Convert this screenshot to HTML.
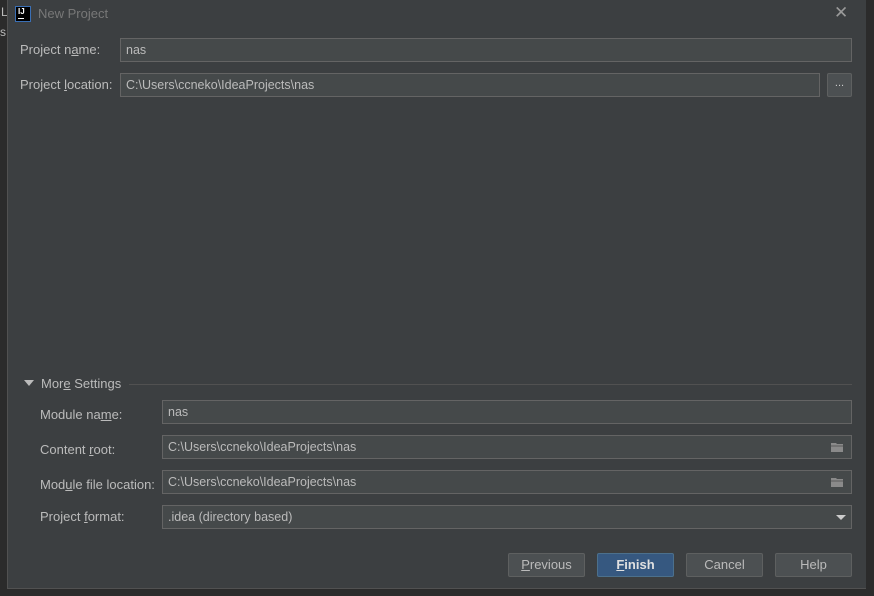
<!DOCTYPE html>
<html><head><meta charset="utf-8"><style>
*{box-sizing:border-box;margin:0;padding:0}
body{width:874px;height:596px;background:#2b2b2b;position:relative;overflow:hidden;font-family:"Liberation Sans",sans-serif;font-size:13px;color:#bbbbbb}
.dlg{position:absolute;left:7px;top:0;width:859px;height:589px;background:#3c3f41;border-left:1px solid #515151;border-bottom:1px solid #515151}
.ab{position:absolute}
.lbl{position:absolute;color:#bbbbbb;font-size:13px}
.fld{position:absolute;height:24px;background:#45494a;border:1px solid #646464;color:#bbbbbb;padding:3px 5px;font-size:12.5px;line-height:16px}
.btn{position:absolute;top:553px;height:24px;width:77px;border:1px solid #5e6060;background:#4c5052;color:#bbbbbb;text-align:center;line-height:22px;border-radius:2px;font-size:13px}
u{text-decoration:underline}
</style></head><body>
<div class="ab" style="left:1px;top:5px;color:#bbb;font-size:12px">L</div>
<div class="ab" style="left:0;top:25px;color:#bbb;font-size:12px">s</div>
<div class="dlg">
  <div class="ab" style="left:7px;top:6px;width:16px;height:16px;background:#000;border:1px solid #3a6fb5;color:#fff;font-size:8px;font-weight:bold;line-height:9px;padding-left:2px">IJ<div style="width:6px;height:1px;background:#fff;margin-top:2px"></div></div>
  <div class="ab" style="left:30px;top:6px;color:#787878;font-size:13px">New Project</div>
  <div class="ab" style="left:826px;top:3px;color:#9a9a9a;font-size:17px">✕</div>

  <div class="lbl" style="left:12px;top:42px">Project n<u>a</u>me:</div>
  <div class="fld" style="left:112px;top:38px;width:732px">nas</div>
  <div class="lbl" style="left:12px;top:77px">Project <u>l</u>ocation:</div>
  <div class="fld" style="left:112px;top:73px;width:700px">C:\Users\ccneko\IdeaProjects\nas</div>
  <div class="ab" style="left:819px;top:73px;width:25px;height:24px;background:#4c5052;border:1px solid #5e6060;border-radius:2px;color:#ccc;text-align:center;line-height:18px;font-size:11px">...</div>

  <div class="ab" style="left:16px;top:380px;width:0;height:0;border-left:5px solid transparent;border-right:5px solid transparent;border-top:6px solid #bbb"></div>
  <div class="lbl" style="left:33px;top:376px">Mor<u>e</u> Settings</div>
  <div class="ab" style="left:121px;top:384px;width:723px;height:1px;background:#515151"></div>

  <div class="lbl" style="left:32px;top:407px">Module na<u>m</u>e:</div>
  <div class="fld" style="left:154px;top:400px;width:690px">nas</div>
  <div class="lbl" style="left:32px;top:442px">Content <u>r</u>oot:</div>
  <div class="fld" style="left:154px;top:435px;width:690px">C:\Users\ccneko\IdeaProjects\nas</div>
  <div class="lbl" style="left:32px;top:477px">Mod<u>u</u>le file location:</div>
  <div class="fld" style="left:154px;top:470px;width:690px">C:\Users\ccneko\IdeaProjects\nas</div>
  <div class="lbl" style="left:32px;top:509px">Project <u>f</u>ormat:</div>
  <div class="fld" style="left:154px;top:505px;width:690px">.idea (directory based)</div>
  <svg class="ab" style="left:822px;top:441px" width="14" height="12"><path d="M1 2h5l1 1h6v8H1z" fill="#8a8a8a"/><path d="M1 5h12" stroke="#5a5a5a"/></svg>
  <svg class="ab" style="left:822px;top:476px" width="14" height="12"><path d="M1 2h5l1 1h6v8H1z" fill="#8a8a8a"/><path d="M1 5h12" stroke="#5a5a5a"/></svg>
  <div class="ab" style="left:828px;top:515px;width:0;height:0;border-left:5px solid transparent;border-right:5px solid transparent;border-top:5px solid #ccc"></div>

  <div class="btn" style="left:500px"><u>P</u>revious</div>
  <div class="btn" style="left:589px;background:#365880;border-color:#4c708c;color:#e0e0e0;font-weight:bold"><u>F</u>inish</div>
  <div class="btn" style="left:678px">Cancel</div>
  <div class="btn" style="left:767px">Help</div>
</div>
</body></html>
